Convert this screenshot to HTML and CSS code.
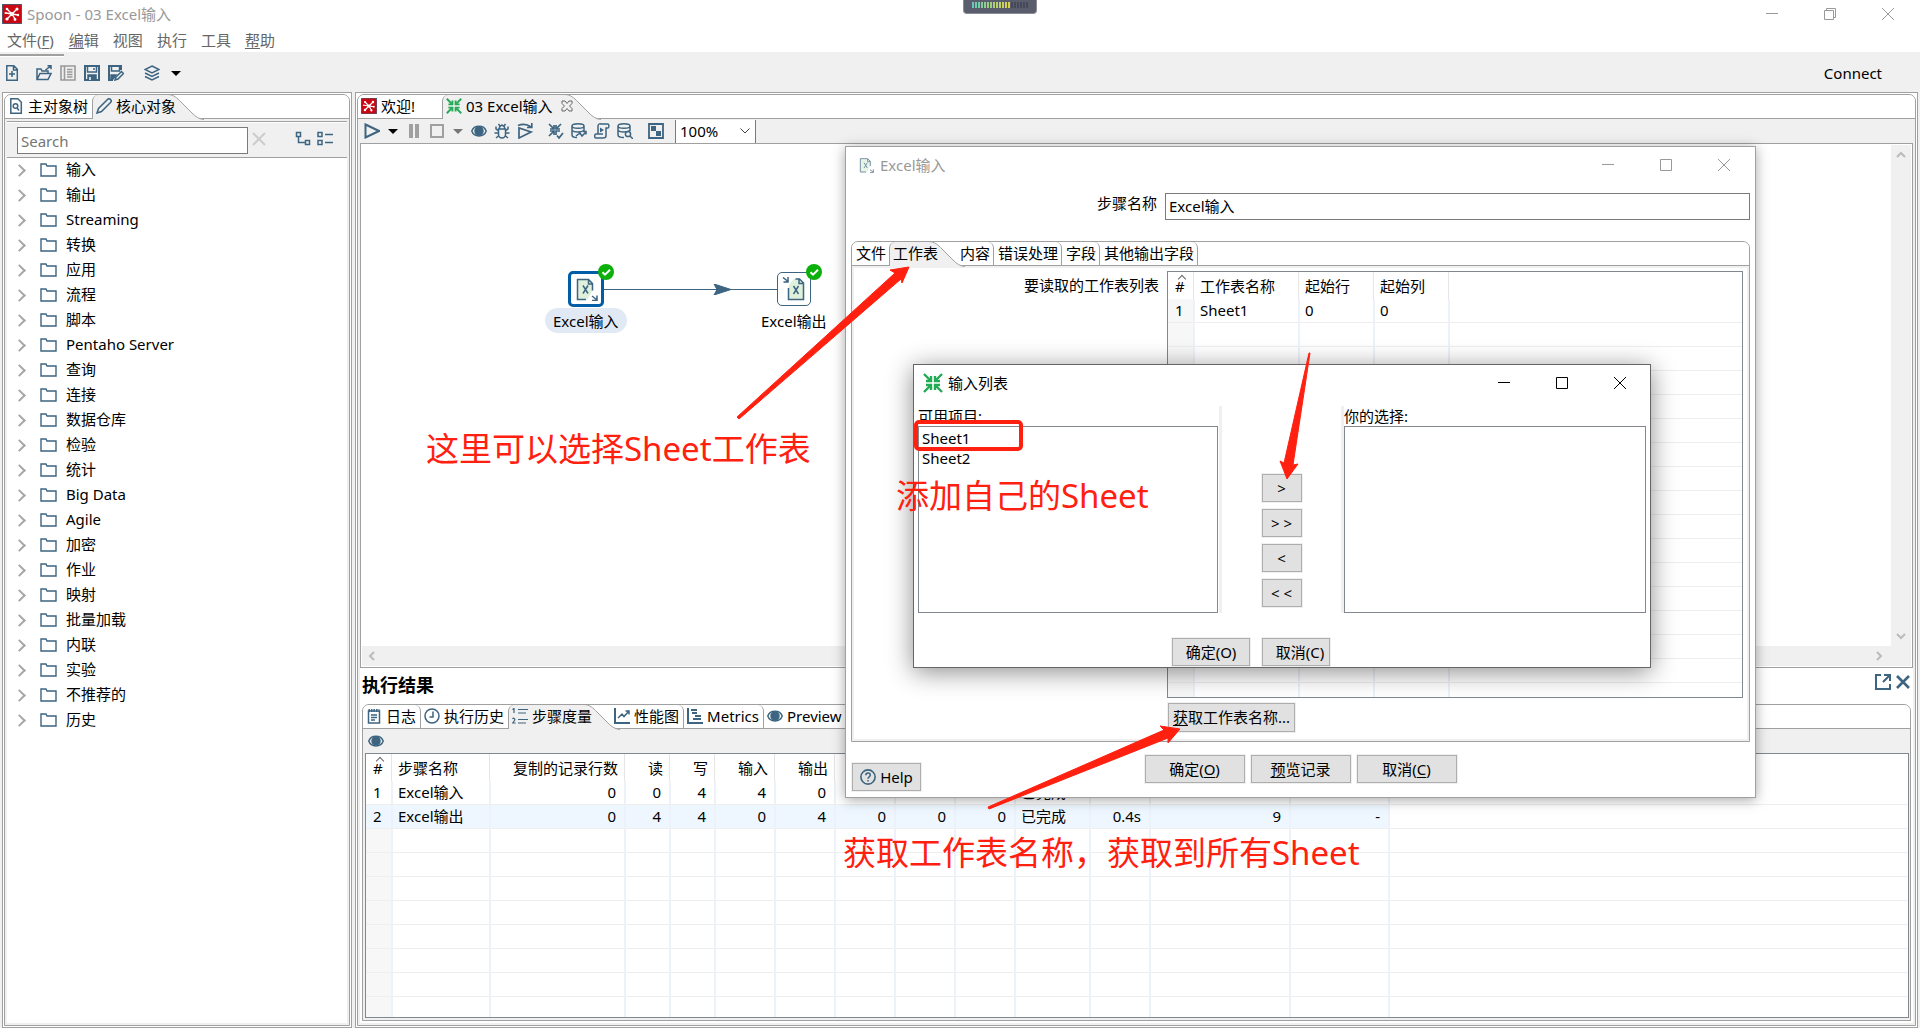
FILE: index.html
```html
<!DOCTYPE html>
<html lang="zh-CN">
<head>
<meta charset="utf-8">
<title>Spoon - 03 Excel输入</title>
<link rel="stylesheet" href="styles.css">
</head>
<body>
<svg class="sprite" aria-hidden="true">
  <symbol id="logo" viewBox="0 0 20 20"><rect width="20" height="20" rx="2" fill="#c90813"/><g stroke="#fff" stroke-width="1.4" fill="#fff"><path d="M10 10L5 5M10 10l5-5M10 10l6 1M10 10l3 5M10 10l-5 5M10 10L4 9" fill="none"/><g stroke="none"><circle cx="5" cy="5" r="1.3"/><circle cx="15" cy="5" r="1.5"/><circle cx="16" cy="11" r="1.2"/><circle cx="13" cy="15.500" r="1.4"/><circle cx="5" cy="15" r="1.6"/><circle cx="3.500" cy="9" r="1"/><circle cx="10" cy="10" r="2"/></g></g></symbol>
  <symbol id="new" viewBox="0 0 16 16"><path d="M2.800.800h7l3.500 3.500v11H2.800zM9.500 1v4h4M8 6v6M5 9h6"/></symbol>
  <symbol id="open" viewBox="0 0 16 16"><path d="M1 14.500V4h4l1 2h6v2.500M1 14.500h11l3-6H4zM9.500 5L15 .8M11.500.800H15v3.500"/></symbol>
  <symbol id="book" viewBox="0 0 16 16"><path d="M1 1h14v14H1zM4.500 1v14M7 4.500h5.500M7 7h5.500M7 9.500h5.500M7 12h5.500" stroke-width="1.600"/></symbol>
  <symbol id="save" viewBox="0 0 16 16"><path d="M1 1h14v14H1z" stroke-width="2"/><path d="M3.500 1v6h9V1M10 3v2"/><path d="M4 10h8v5H4z" fill="#3d6480"/><path d="M6 12v3" stroke="#fff"/></symbol>
  <symbol id="saveas" viewBox="0 0 16 16"><path d="M13 5V1H1v14h4" stroke-width="2"/><path d="M3.500 1v5h8V1"/><path d="M3 10h5l-3 4H3z" fill="#3d6480"/><path d="M8 12l5.500-5.500 2 2L10 14l-3 1z"/></symbol>
  <symbol id="layers" viewBox="0 0 16 16"><path d="M8 1l7 3.500L8 8 1 4.500zM1 8l7 3.500L15 8M1 11.500L8 15l7-3.500"/></symbol>
  <symbol id="caret" viewBox="0 0 10 16"><path d="M0 6h10L5 11z" fill="#000" stroke="none"/></symbol>
  <symbol id="caretg" viewBox="0 0 10 16"><path d="M0 6h10L5 11z" fill="#777" stroke="none"/></symbol>
  <symbol id="page" viewBox="0 0 16 16"><path d="M2.800.800h7l3.500 3.500v11H2.800z"/><circle cx="7.500" cy="8" r="2.300"/><path d="M9 10l2 2.500"/></symbol>
  <symbol id="pencil" viewBox="0 0 16 16"><path d="M1 15l1.500-4.500L11.500 1.500a2 2 0 0 1 3 3L5.500 13.500z"/></symbol>
  <symbol id="arrow-in" viewBox="0 0 20 20"><g fill="none" stroke="#22aa55" stroke-width="2.400"><path d="M1 1l6 6M19 1l-6 6M1 19l6-6M19 19l-6-6"/><path d="M8 3v5H3M12 3v5h5M8 17v-5H3M12 17v-5h5"/></g></symbol>
  <symbol id="tabx" viewBox="0 0 12 12"><path d="M1 1h3l2 2.500L8 1h3v2.500L8.500 6 11 8.500V11H8L6 8.500 4 11H1V8.500L3.500 6 1 3.500z" stroke="#666" stroke-width="1"/></symbol>
  <symbol id="run" viewBox="0 0 16 16"><path d="M1.500 1.500L15 8 1.500 14.500z" stroke-width="2"/></symbol>
  <symbol id="pause" viewBox="0 0 16 16"><path d="M5 1v14M11 1v14" stroke="#a0a0a0" stroke-width="4"/></symbol>
  <symbol id="stop" viewBox="0 0 16 16"><path d="M2 2h12v12H2z" stroke="#a0a0a0" stroke-width="2"/></symbol>
  <symbol id="eye" viewBox="0 0 16 16"><path d="M.8 8C3 1.500 13 1.500 15.200 8 13 14.500 3 14.500.8 8z"/><circle cx="8" cy="8" r="4" fill="#3d6480"/></symbol>
  <symbol id="bug" viewBox="0 0 16 16"><path d="M4.500 6h7v5.500a3.500 3.500 0 0 1-7 0zM5.500 6V4l2.500-2 2.500 2v2M4.500 8L2 6V3.500M11.500 8L14 6V3.500M4.500 10H.5M11.500 10h4M5 12.500L2 15M11 12.500l3 2.500M4.500 1l1.500 2M11.500 1L10 3"/></symbol>
  <symbol id="replay" viewBox="0 0 16 16"><path d="M2 5v10l12-6zM1 2.500c4-1.500 9-1.500 13 1.500M14.800 0v4.500H10" stroke-width="1.700"/></symbol>
  <symbol id="verify" viewBox="0 0 16 16"><path d="M1 1l5 5M13 1L8 6M1 13l5-5M6 2v4H2M8 2v4h4M6 12V8H2M8 12V8h4M9 12.500l2 2.500 4-5" stroke-width="1.700"/></symbol>
  <symbol id="dbup" viewBox="0 0 16 16"><path d="M1 3c0-3 12-3 12 0s-12 3-12 0v9c0 1.500 2 2.500 5 2.500M1 7.500c2 2 9 2 12 0V3M5 13l4-3 2 3 4-4M12 8.500h3v3"/></symbol>
  <symbol id="script" viewBox="0 0 16 16"><path d="M4 11V3c0-3 3-2 3-2h6.500c2 0 1.500 4 .5 4h-2v8c0 2-3 2-3 2H2c-2 0-1.500-4 0-4h7"/><path d="M6 4.500L10 7 6 9.500z" fill="#3d6480" stroke="none"/></symbol>
  <symbol id="dbfind" viewBox="0 0 16 16"><path d="M1 3c0-3 12-3 12 0s-12 3-12 0v9c0 1.500 3 2.500 6 2.500M1 7.500c2 2 9 2 12 0V3"/><circle cx="11" cy="11" r="2.600"/><path d="M13 13l3 3"/></symbol>
  <symbol id="grid" viewBox="0 0 16 16"><path d="M1 1h14v14H1z" stroke-width="1.800"/><path d="M3 3h5v5H3zM8 8h5v5H8z" fill="#3d6480" stroke="none"/></symbol>
  <symbol id="tree" viewBox="0 0 16 16"><path d="M1.500 1.500h4v4h-4zM10.500 9.500h4v4h-4zM3.500 5.500v6h7"/></symbol>
  <symbol id="list" viewBox="0 0 16 16"><path d="M1 1.500h4v4H1zM1 9.500h4v4H1zM8 3.500h8M8 11.500h8"/></symbol>
  <symbol id="clear" viewBox="0 0 16 16"><path d="M2 2l12 12M14 2L2 14" stroke="#ccc" stroke-width="2"/></symbol>
  <symbol id="log" viewBox="0 0 16 16"><path d="M2.500 3h11v12h-11zM5 7h6M5 9.500h6M5 12h4"/><path d="M2.500 2.500h11" stroke-width="3" stroke-dasharray="1.500 1"/></symbol>
  <symbol id="clock" viewBox="0 0 16 16"><circle cx="8" cy="8" r="7"/><path d="M9 3.500V9H5.500"/></symbol>
  <symbol id="steps" viewBox="0 0 16 16"><path d="M6 1.500h10M6 5h8M6 11.500h10M6 15h8M.5 1.500L2 .5V5M.5 11c1-1.500 3-.5 2 1.500L.7 15h3" stroke-width="1.200"/></symbol>
  <symbol id="chart" viewBox="0 0 16 16"><path d="M1 0v15h15" stroke-width="2"/><path d="M4 10l4-4 2 2.500L15 3M11.500 3H15v3.500"/></symbol>
  <symbol id="metrics" viewBox="0 0 16 16"><path d="M1 0v15h15" stroke-width="2"/><path d="M4 2h6M5 5h5M8 8h6M6 11h8" stroke-width="2.200"/></symbol>
  <symbol id="popout" viewBox="0 0 16 16"><path d="M6 1H1v14h14v-5M8 8l7-7M9 1h6v6" stroke-width="2"/></symbol>
  <symbol id="cross" viewBox="0 0 16 16"><path d="M2 2l12 12M14 2L2 14" stroke-width="2.600"/></symbol>
  <symbol id="help" viewBox="0 0 16 16"><circle cx="8" cy="8" r="7.100" stroke-width="1.600"/><path d="M5.800 6.200c0-3 4.500-3 4.500-.2C10.300 8 8 7.600 8 9.700M8 11v1.500"/></symbol>
  <symbol id="xls-in" viewBox="0 0 24 24"><path d="M3.500 2.500h11l4 4v7l-5 9h-10z" fill="#dff0dc" stroke="none"/><path d="M12 22.500H3.500v-20h11l4 4v7M14.500 3v4h4M9 8.500l5 8M14 8.500l-5 8" fill="none"/><path d="M18 19l5 4M23 18.500V23.500h-5"/></symbol>
  <symbol id="xls-out" viewBox="0 0 24 24"><path d="M6.500 9l5-7h6l4 4v16.500h-15z" fill="#dff0dc" stroke="none"/><path d="M6.500 11v11.500h15V6l-4-4h-4M17 2.500v4h4M11.500 9l5 8M16.500 9l-5 8" fill="none"/><path d="M1 .5l5 4M6 0v5H1.500"/></symbol>
  <symbol id="min" viewBox="0 0 12 12"><path d="M0 5.500h12"/></symbol>
  <symbol id="max" viewBox="0 0 12 12"><path d="M.5.500h11v11H.5z"/></symbol>
  <symbol id="restore" viewBox="0 0 12 12"><path d="M.5 2.500h9v9h-9zM2.500 2.500v-2h9v9h-2"/></symbol>
  <symbol id="close" viewBox="0 0 12 12"><path d="M0 0l12 12M12 0L0 12"/></symbol>
  <symbol id="curve" viewBox="0 0 37 25"><path d="M0 0C7 0 10 3 14 7L25 18C29 22 32 24 37 24V25H0z" fill="#f0f0f0" stroke="none"/><path d="M0 -.5C7 -.5 10 3 14 7L25 18C29 22 32 24 37 24.500" stroke="#a0a0a0" stroke-width="1" fill="none"/></symbol>
  <symbol id="ok" viewBox="0 0 16 16"><circle cx="8" cy="8" r="8" fill="#0bb00b" stroke="none"/><path d="M4.500 8.200l2.500 2.500 5-5" stroke="#fff" stroke-width="2"/></symbol>
</svg>

<header class="titlebar">
  <svg class="i20"><use href="#logo"/></svg>
  <h1>Spoon - 03 Excel输入</h1>
  <div class="winctl">
    <button aria-label="最小化"><svg><use href="#min"/></svg></button>
    <button aria-label="还原"><svg><use href="#restore"/></svg></button>
    <button aria-label="关闭"><svg><use href="#close"/></svg></button>
  </div>
</header>
<div class="meter" aria-hidden="true"><i></i></div>
<nav class="menubar">
  <button>文件(<u>F</u>)</button><button><u>编</u>辑</button><button>视图</button><button>执行</button><button>工具</button><button><u>帮</u>助</button>
</nav>
<div class="maintools">
  <button aria-label="新建"><svg><use href="#new"/></svg></button>
  <button class="sep" aria-label="打开"><svg><use href="#open"/></svg></button>
  <button aria-label="浏览"><svg class="off"><use href="#book"/></svg></button>
  <button aria-label="保存"><svg><use href="#save"/></svg></button>
  <button aria-label="另存为"><svg><use href="#saveas"/></svg></button>
  <button class="sep wide" aria-label="视角"><svg><use href="#layers"/></svg></button>
  <button class="caret" aria-label="视角菜单"><svg><use href="#caret"/></svg></button>
  <button class="connect">Connect</button>
</div>

<main class="main">
  <aside class="pane side">
    <div class="frame">
      <div class="strip">
        <button class="tab"><svg><use href="#page"/></svg>主对象树</button>
        <button class="tab active"><svg class="curve"><use href="#curve"/></svg><svg><use href="#pencil"/></svg><span>核心对象</span></button>
      </div>
      <div class="finder">
        <input type="text" placeholder="Search" aria-label="Search">
        <button aria-label="清除"><svg><use href="#clear"/></svg></button>
        <button class="right" aria-label="展开"><svg><use href="#tree"/></svg></button>
        <button aria-label="折叠"><svg><use href="#list"/></svg></button>
      </div>
      <ul class="tree">
        <li>输入</li><li>输出</li><li>Streaming</li><li>转换</li><li>应用</li><li>流程</li><li>脚本</li><li>Pentaho Server</li><li>查询</li><li>连接</li><li>数据仓库</li><li>检验</li><li>统计</li><li>Big Data</li><li>Agile</li><li>加密</li><li>作业</li><li>映射</li><li>批量加载</li><li>内联</li><li>实验</li><li>不推荐的</li><li>历史</li>
      </ul>
    </div>
  </aside>

  <section class="pane work">
    <div class="frame">
      <div class="strip">
        <button class="tab welcome"><svg><use href="#logo"/></svg>欢迎!</button>
        <button class="tab active"><svg class="curve"><use href="#curve"/></svg><svg><use href="#arrow-in"/></svg><span>03 Excel输入</span><svg class="tabx"><use href="#tabx"/></svg></button>
      </div>
      <div class="runbar">
        <button aria-label="运行"><svg><use href="#run"/></svg></button>
        <button class="caret" aria-label="运行选项"><svg><use href="#caret"/></svg></button>
        <button aria-label="暂停"><svg><use href="#pause"/></svg></button>
        <button aria-label="停止"><svg><use href="#stop"/></svg></button>
        <button class="caret" aria-label="停止选项"><svg><use href="#caretg"/></svg></button>
        <button aria-label="预览"><svg><use href="#eye"/></svg></button>
        <button aria-label="调试"><svg><use href="#bug"/></svg></button>
        <button aria-label="重放"><svg><use href="#replay"/></svg></button>
        <button class="sep" aria-label="校验"><svg><use href="#verify"/></svg></button>
        <button aria-label="影响"><svg><use href="#dbup"/></svg></button>
        <button aria-label="SQL"><svg><use href="#script"/></svg></button>
        <button aria-label="浏览数据库"><svg><use href="#dbfind"/></svg></button>
        <button class="sep" aria-label="结果面板"><svg><use href="#grid"/></svg></button>
        <select class="zoom" aria-label="缩放"><option>100%</option></select>
      </div>
      <div class="canvas">
        <div class="sheet">
          <svg class="hop"><path d="M0 5.500h174" /><path d="M110 0l17 5.500-17 5.500 3-5.500z" class="head"/></svg>
          <div class="node a"><svg><use href="#xls-in"/></svg></div>
          <div class="node b"><svg><use href="#xls-out"/></svg></div>
          <svg class="ok ok-a"><use href="#ok"/></svg>
          <svg class="ok ok-b"><use href="#ok"/></svg>
          <span class="name name-a">Excel输入</span>
          <span class="name name-b">Excel输出</span>
        </div>
        <div class="vbar"><svg viewBox="0 0 12 12"><path d="M2 8l4-4 4 4"/></svg><svg viewBox="0 0 12 12"><path d="M2 4l4 4 4-4"/></svg></div>
        <div class="hbar"><svg viewBox="0 0 12 12"><path d="M8 2L4 6l4 4"/></svg><svg viewBox="0 0 12 12"><path d="M4 2l4 4-4 4"/></svg></div>
      </div>
      <section class="results">
        <header><h2>执行结果</h2>
          <button aria-label="弹出"><svg><use href="#popout"/></svg></button>
          <button aria-label="关闭"><svg><use href="#cross"/></svg></button>
        </header>
        <div class="frame">
          <div class="strip">
            <button class="tab line"><svg><use href="#log"/></svg>日志</button>
            <button class="tab"><svg><use href="#clock"/></svg>执行历史</button>
            <button class="tab active"><svg class="curve"><use href="#curve"/></svg><svg><use href="#steps"/></svg><span>步骤度量</span></button>
            <button class="tab line after"><svg><use href="#chart"/></svg>性能图</button>
            <button class="tab line"><svg><use href="#metrics"/></svg>Metrics</button>
            <button class="tab"><svg><use href="#eye"/></svg>Preview</button>
          </div>
          <div class="eyebar"><button aria-label="预览"><svg><use href="#eye"/></svg></button></div>
          <table class="grid">
            <colgroup><col class="c27"><col class="c98"><col class="c135"><col class="c45"><col class="c45"><col class="c60"><col class="c60"><col class="c60"><col class="c60"><col class="c60"><col class="c75"><col class="c60"><col class="c140"><col class="c99"><col></colgroup>
            <thead><tr><th class="sort">#</th><th class="l">步骤名称</th><th>复制的记录行数</th><th>读</th><th>写</th><th>输入</th><th>输出</th><th></th><th></th><th></th><th></th><th></th><th></th><th></th><th></th></tr></thead>
            <tbody>
              <tr><td>1</td><td class="l">Excel输入</td><td>0</td><td>0</td><td>4</td><td>4</td><td>0</td><td>0</td><td>0</td><td>0</td><td class="l">已完成</td><td>0.0s</td><td>133</td><td>-</td><td></td></tr>
              <tr class="alt"><td>2</td><td class="l">Excel输出</td><td>0</td><td>4</td><td>4</td><td>0</td><td>4</td><td>0</td><td>0</td><td>0</td><td class="l">已完成</td><td>0.4s</td><td>9</td><td>-</td><td></td></tr>
              <tr class="empty"><td></td><td></td><td></td><td></td><td></td><td></td><td></td><td></td><td></td><td></td><td></td><td></td><td></td><td></td><td></td></tr>
            </tbody>
          </table>
        </div>
      </section>
    </div>
  </section>
</main>

<section class="dialog excel" role="dialog" aria-label="Excel输入">
  <header><svg class="i16"><use href="#xls-in"/></svg><h2>Excel输入</h2>
    <div class="winctl">
      <button aria-label="最小化"><svg><use href="#min"/></svg></button>
      <button aria-label="最大化"><svg><use href="#max"/></svg></button>
      <button aria-label="关闭"><svg><use href="#close"/></svg></button>
    </div>
  </header>
  <div class="field"><label for="step">步骤名称</label><input id="step" type="text" value="Excel输入"></div>
  <div class="frame">
    <div class="strip">
      <button class="tab">文件</button>
      <button class="tab active"><svg class="curve"><use href="#curve"/></svg><span>工作表</span></button>
      <button class="tab line after">内容</button>
      <button class="tab line">错误处理</button>
      <button class="tab line">字段</button>
      <button class="tab line">其他输出字段</button>
    </div>
    <div class="sheets">
      <span class="cap" id="cap">要读取的工作表列表</span>
      <div>
        <table class="grid" aria-labelledby="cap">
          <colgroup><col class="c27"><col class="c105"><col class="c75"><col class="c75"><col></colgroup>
          <thead><tr><th class="sort">#</th><th class="l">工作表名称</th><th class="l">起始行</th><th class="l">起始列</th><th></th></tr></thead>
          <tbody>
            <tr><td>1</td><td class="l">Sheet1</td><td class="l">0</td><td class="l">0</td><td></td></tr>
            <tr class="empty"><td></td><td></td><td></td><td></td><td></td></tr>
          </tbody>
        </table>
        <button class="btn fetch"><u>获</u>取工作表名称...</button>
      </div>
    </div>
  </div>
  <footer>
    <button class="btn help"><svg><use href="#help"/></svg>Help</button>
    <div><button class="btn">确定(<u>O</u>)</button><button class="btn"><u>预</u>览记录</button><button class="btn">取消(<u>C</u>)</button></div>
  </footer>
</section>

<section class="dialog picker" role="dialog" aria-label="输入列表">
  <header><svg class="i20"><use href="#arrow-in"/></svg><h2>输入列表</h2>
    <div class="winctl">
      <button aria-label="最小化"><svg><use href="#min"/></svg></button>
      <button aria-label="最大化"><svg><use href="#max"/></svg></button>
      <button aria-label="关闭"><svg><use href="#close"/></svg></button>
    </div>
  </header>
  <div class="lists">
    <div class="col"><label for="from">可用项目:</label><select id="from" multiple><option>Sheet1</option><option>Sheet2</option></select></div>
    <div class="moves"><button class="btn">&gt;</button><button class="btn">&gt; &gt;</button><button class="btn">&lt;</button><button class="btn">&lt; &lt;</button></div>
    <div class="col rightcol"><label for="to">你的选择:</label><select id="to" multiple></select></div>
  </div>
  <footer><button class="btn">确定(O)</button><button class="btn">取消(C)</button></footer>
</section>

<div class="notes">
  <svg class="arrows" width="1400" height="900" viewBox="0 0 1400 900">
    <path d="M737 417L895 273 890 270 909 267 902 283 901 279 739 419z"/>
    <path d="M1309 353L1284 463 1280 461 1287 479 1298 464 1293 465 1310 353z"/>
    <path d="M988 807L1164 730 1160 726 1180 729 1168 743 1168 738 989 809z"/>
  </svg>
  <span class="box"></span>
  <p class="note n1">这里可以选择Sheet工作表</p>
  <p class="note n2">添加自己的Sheet</p>
  <p class="note n3">获取工作表名称，获取到所有Sheet</p>
</div>
</body>
</html>
```
FILE: styles.css
```css
* { box-sizing: border-box; }
body {
  margin: 0;
  min-height: 100vh;
  display: flex;
  flex-direction: column;
  position: relative;
  background: #f0f0f0;
  color: #000;
  font: 15px/20px "Noto Sans", "Noto Sans CJK SC", sans-serif;
}
h1, h2, p, ul { margin: 0; padding: 0; }
h1, h2 { font-size: 15px; font-weight: normal; }
button, input, select { font: inherit; color: inherit; }
button { padding: 0; border: 0; background: none; white-space: nowrap; }
u { text-underline-offset: 2px; }
svg {
  width: 16px;
  height: 16px;
  display: block;
  flex: none;
  fill: none;
  stroke: #3d6480;
  stroke-width: 1.5;
}
.sprite { position: absolute; width: 0; height: 0; }
.i20 { width: 20px; height: 20px; }
.i16 { opacity: .7; }

/* Window chrome */
.titlebar { height: 28px; padding-left: 2px; display: flex; align-items: center; gap: 5px; background: #fff; color: #999; }
.winctl { margin-left: auto; display: flex; gap: 46px; }
.winctl svg { width: 12px; height: 12px; stroke: #999; stroke-width: 1; }
.titlebar .winctl { padding-right: 26px; }
.meter {
  position: absolute;
  left: 963px;
  top: 0;
  width: 74px;
  height: 14px;
  padding: 2px 8px;
  border: 1px solid #8a8d98;
  border-top: 0;
  border-radius: 0 0 4px 4px;
  background: #5a5e6c;
}
.meter i {
  display: block;
  height: 6px;
  background: repeating-linear-gradient(to right, transparent 0 2px, #5a5e6c 2px 3px), linear-gradient(to right, #5fc9c0, #a5cf7a 35%, #dfd04a 68%, #45495a 70%);
}
.menubar { height: 24px; padding-left: 7px; display: flex; align-items: center; gap: 14px; background: #fff; color: #666; }
.menubar button:first-child { margin-right: 1px; }
.maintools { height: 40px; padding: 2px 38px 0 4px; display: flex; align-items: center; gap: 8px; position: relative; }
.maintools::before { content: ""; position: absolute; left: 0; top: 2px; width: 64px; height: 2px; background: #a0a0a0; border-bottom: 1px solid #fff; }
.maintools .sep { margin-left: 8px; }
.maintools .wide { margin: 0 2px 0 12px; }
.caret { width: 12px; display: grid; justify-items: center; }
.caret svg { width: 10px; }
.off { stroke: #999; }
.connect { margin-left: auto; }

/* Panes */
.main { flex: 1; display: flex; gap: 3px; padding: 0 2px; }
.pane { display: flex; border: 1px solid #a0a0a0; padding: 1px; background: #fff; }
.side { flex: none; width: 350px; }
.work { flex: 1; min-width: 0; }
.frame { flex: 1; min-width: 0; display: flex; flex-direction: column; border: 1px solid #a0a0a0; border-radius: 7px 7px 0 0; background: #f0f0f0; }
.pane > .frame { padding-bottom: 2px; }
.strip { height: 24px; flex: none; display: flex; border-bottom: 1px solid #a0a0a0; border-radius: 6px 6px 0 0; background: #fff; }
.tab { height: 23px; padding: 0 3px 1px; display: flex; align-items: center; gap: 4px; position: relative; }
.tab.line { border-right: 1px solid #a0a0a0; border-radius: 0 6px 0 0; }
.tab.active {
  height: 24px;
  padding-right: 28px;
  padding-bottom: 2px;
  border-left: 1px solid #a0a0a0;
  border-radius: 6px 0 0 0;
  background: linear-gradient(#f0f0f0, #f0f0f0) no-repeat 0 0 / calc(100% - 37px) 100%;
}
.tab span { position: relative; }
.tab .curve { position: absolute; right: 0; top: 0; width: 37px; height: 25px; }
.tabx { width: 12px; height: 12px; margin-left: 4px; position: relative; }
.welcome { width: 84px; }
.side .tab { padding-right: 4px; }
.side .tab.active { padding-right: 28px; }

.finder { height: 37px; margin: 2px 2px 0; padding: 5px 14px 0 10px; display: flex; align-items: flex-start; border-top: 1px solid #a0a0a0; border-bottom: 1px solid #a0a0a0; box-shadow: inset 0 1px #fff; }
.finder input { width: 231px; height: 27px; padding-bottom: 0; }
.finder button { margin: 4px 0 0 3px; }
.finder .right { margin-left: auto; margin-right: 3px; }
input { padding: 0 3px 2px; border: 1px solid #7a7a7a; background: #fff; border-radius: 0; }
.tree { flex: 1; margin: 0 2px; background: #fff; list-style: none; }
.tree li { height: 25px; padding-left: 59px; line-height: 23px; position: relative; }
.tree li::before { content: ""; position: absolute; left: 8px; top: 8px; width: 7px; height: 7px; border: solid #a6a6a6; border-width: 2px 2px 0 0; transform: rotate(45deg); }
.tree li::after { content: ""; position: absolute; left: 33px; top: 5px; width: 17px; height: 14px; background: url("data:image/svg+xml,%3Csvg xmlns='http://www.w3.org/2000/svg' viewBox='0 0 17 14'%3E%3Cpath d='M1 1h5l1 2h9v10H1z' fill='none' stroke='%233d6480' stroke-width='1.4'/%3E%3C/svg%3E"); }

/* Canvas */
.runbar { height: 24px; padding: 0 6px; display: flex; align-items: center; gap: 7px; }
.runbar .sep { margin-left: 8px; }
.zoom {
  width: 81px;
  height: 23px;
  margin-left: 4px;
  padding: 0 4px 1px;
  appearance: none;
  border: solid #7a7a7a;
  border-width: 0 1px;
  border-radius: 0;
  background: #fff url("data:image/svg+xml,%3Csvg xmlns='http://www.w3.org/2000/svg' viewBox='0 0 10 6'%3E%3Cpath d='M.5.5L5 5 9.500.5' fill='none' stroke='%23444'/%3E%3C/svg%3E") no-repeat right 5px center / 10px 6px;
}
.canvas { flex: 1; min-height: 300px; margin: 0 2px; padding: 1px; display: grid; grid-template: 1fr 20px / 1fr 20px; border: 1px solid #a0a0a0; background: #fff; }
.sheet { position: relative; }
.vbar, .hbar { display: flex; justify-content: space-between; background: #f0f0f0; }
.vbar { flex-direction: column; align-items: center; padding: 4px 0; }
.hbar { grid-column: 1 / 3; align-items: center; padding: 0 26px 0 4px; }
.vbar svg, .hbar svg { width: 12px; height: 12px; stroke: #bbb; stroke-width: 2; }
.hop { position: absolute; left: 242px; top: 139px; width: 174px; height: 11px; stroke-width: 1; }
.hop .head { fill: #3d6480; }
.node { position: absolute; display: grid; place-items: center; background: #fff; border-radius: 5px; }
.node svg { width: 24px; height: 24px; }
.a { left: 206px; top: 126px; width: 36px; height: 36px; border: 3px solid #005da6; }
.b { left: 415px; top: 127px; width: 34px; height: 34px; border: 1px solid #3d6480; }
.ok { position: absolute; top: 119px; }
.ok-a { left: 236px; }
.ok-b { left: 444px; }
.name { position: absolute; top: 163px; height: 25px; padding: 0 8px; line-height: 27px; border-radius: 13px; white-space: nowrap; }
.name-a { left: 183px; background: #e1eaf4; }
.name-b { left: 391px; }

/* Results */
.results { margin: 0 2px; padding: 0 2px 2px; background: #fff; }
.results header { height: 36px; display: flex; align-items: center; gap: 4px; padding-bottom: 2px; }
.results header button { margin-bottom: 6px; }
.results h2 { margin-right: auto; font-size: 18px; font-weight: bold; }
.results .frame { padding-bottom: 2px; }
.results .tab { padding-right: 4px; }
.results .tab.active { padding-right: 28px; }
.after { margin-left: -9px; }
.eyebar { height: 24px; padding: 4px 5px; }
.grid { width: calc(100% - 3px); margin: 0 1px 0 2px; table-layout: fixed; border-collapse: separate; border-spacing: 0; border: 1px solid #828790; background: #fff; }
.c27 { width: 27px; } .c45 { width: 45px; } .c60 { width: 60px; } .c75 { width: 75px; } .c98 { width: 98px; }
.c99 { width: 99px; } .c105 { width: 105px; } .c135 { width: 135px; } .c140 { width: 140px; }
.grid th { height: 27px; padding: 1px 8px 0; line-height: 20px; font-weight: normal; text-align: right; white-space: nowrap; background: linear-gradient(#e5e5e5, #e5e5e5) no-repeat right 1px top / 1px 100%; }
.grid td { height: 24px; padding: 1px 8px 2px; line-height: 20px; text-align: right; border-right: 2px solid #edf1f9; border-bottom: 1px solid #eee; white-space: nowrap; }
.grid th:last-child { background: none; }
.grid td:last-child { border-right: 0; }
.grid .l { text-align: left; padding-left: 5px; }
.grid th:first-child, .grid td:first-child { padding-left: 7px; text-align: left; }
.grid .sort { position: relative; }
.sort::before { content: ""; position: absolute; left: 11px; top: 4px; width: 5px; height: 5px; border: solid #666; border-width: 1px 0 0 1px; transform: rotate(45deg); }
.grid .alt td { background: #eef7ff; }
.grid .alt td:last-child { background: #fff; }
.grid .empty td { height: 188px; padding: 0; border-bottom: 0; background: repeating-linear-gradient(to bottom, transparent 0 23px, #eee 23px 24px); }
.grid .empty td:first-child { background-color: #f7f7f7; }

/* Dialogs */
.dialog { position: absolute; background: #fff; }
.dialog header { display: flex; align-items: center; }
.btn { height: 28px; padding-bottom: 1px; border: 1px solid #adadad; background: #e1e1e1; box-shadow: 0 0 0 1px #f0f0f0; }
.excel { left: 845px; top: 146px; width: 911px; border: 1px solid #a0a0a0; box-shadow: 0 2px 12px rgba(0, 0, 0, .35); padding: 0 5px; }
.excel header { height: 46px; padding: 0 20px 10px 7px; gap: 6px; color: #999; }
.field { display: grid; grid-template-columns: 314px 1fr; }
.field label { padding: 0 8px 0 0; text-align: right; }
.field input { height: 27px; }
.excel .frame { margin-top: 21px; }
.excel .tab { padding-left: 4px; }
.excel .tab.active { padding-left: 3px; padding-right: 27px; }
.sheets { border: 2px solid #f0f0f0; background: #fff; padding: 3px 4px 7px 0; display: grid; grid-template-columns: 313px 1fr; }
.cap { padding: 4px 8px 0 0; text-align: right; }
.sheets .grid { width: 100%; margin: 0; }
.sheets .grid .empty td { height: 374px; }
.sheets .grid td:first-child { background-color: #f7f7f7; }
.fetch { width: 127px; height: 29px; margin: 5px 0 0 1px; display: block; }
.excel footer { height: 55px; padding: 13px 1px 6px; display: grid; grid-template-columns: 1fr auto 1fr; }
.excel footer div { display: flex; gap: 6px; }
.excel footer div .btn { width: 100px; }
.help { align-self: end; width: 69px; display: flex; align-items: center; justify-content: center; gap: 4px; }
.picker { left: 913px; top: 364px; width: 738px; border: 1px solid #666; box-shadow: 0 4px 24px rgba(0, 0, 0, .45); padding: 0 4px; }
.picker header { height: 41px; gap: 5px; padding: 0 20px 5px 5px; }
.picker .winctl svg { stroke: #000; }
.lists { display: flex; }
.col { width: 304px; padding-right: 1px; border-right: 3px solid #f0f0f0; display: flex; flex-direction: column; }
.rightcol { width: 305px; padding-right: 0; border-right: 0; border-left: 3px solid #f0f0f0; }
.col label { height: 20px; line-height: 20px; }
.col select { height: 187px; padding: 1px 0; border: 1px solid #828790; border-radius: 0; background: #fff; overflow: hidden; outline: 0; }
.col option { height: 20px; min-height: 20px; padding: 0 3px; line-height: 20px; }
.moves { flex: 1; padding-top: 68px; display: flex; flex-direction: column; align-items: center; gap: 7px; }
.moves .btn { width: 40px; }
.picker footer { padding: 25px 0 1px 254px; display: flex; gap: 12px; }
.picker footer .btn { width: 68px; padding-left: 8px; }
.picker footer .btn:first-child { width: 78px; padding-left: 0; }

/* Annotations over the windows */
.arrows { position: absolute; left: 0; top: 0; width: 1400px; height: 900px; fill: #ff2010; stroke: #ff2010; stroke-width: 1; pointer-events: none; }
.box { position: absolute; left: 914px; top: 420px; width: 109px; height: 31px; border: 4px solid #ff2010; border-radius: 5px; pointer-events: none; }
.note { position: absolute; color: #ff2010; font-size: 33px; line-height: 40px; white-space: nowrap; pointer-events: none; }
.n1 { left: 426px; top: 429px; }
.n2 { left: 896px; top: 476px; }
.n3 { left: 843px; top: 833px; }
```
